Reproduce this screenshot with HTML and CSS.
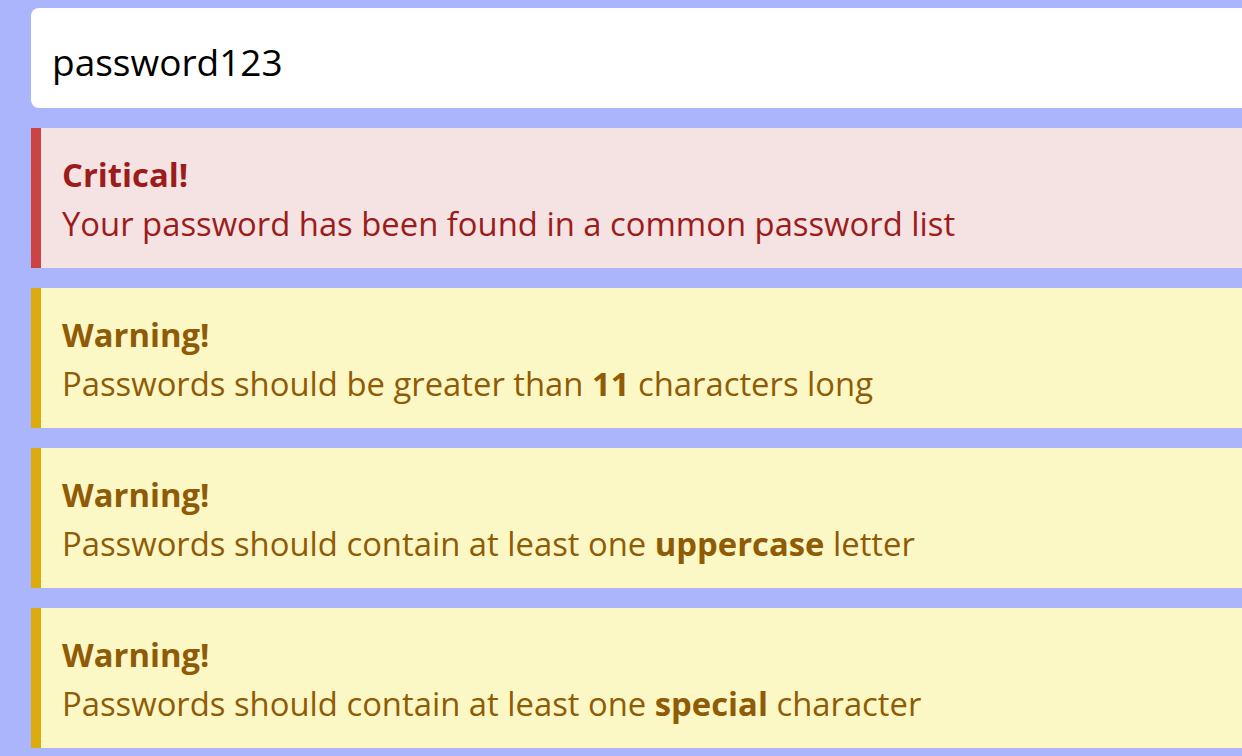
FILE: index.html
```html
<!DOCTYPE html>
<html>
<head>
<meta charset="utf-8">
<link rel="stylesheet" href="styles.css">
</head>
<body>
<div class="wrap">
  <input class="pw" type="text" value="password123">
  <div class="alert critical">
    <div class="title">Critical!</div>
    <div class="msg">Your password has been found in a common password list</div>
  </div>
  <div class="alert warning">
    <div class="title">Warning!</div>
    <div class="msg">Passwords should be greater than <b>11</b> characters long</div>
  </div>
  <div class="alert warning">
    <div class="title">Warning!</div>
    <div class="msg">Passwords should contain at least one <b>uppercase</b> letter</div>
  </div>
  <div class="alert warning">
    <div class="title">Warning!</div>
    <div class="msg">Passwords should contain at least one <b>special</b> character</div>
  </div>
</div>
</body>
</html>
```
FILE: styles.css
```css
html, body {
  margin: 0;
  padding: 0;
  overflow: hidden;
  background: #aab5fb;
  height: 756px;
}
.wrap {
  padding: 8px 0 8px 31px;
  display: flex;
  flex-direction: column;
  gap: 20px;
  font-family: "Open Sans", "Noto Sans", sans-serif;
  font-size: 32.8px;
}
.pw {
  box-sizing: border-box;
  width: 100%;
  height: 100px;
  border: none;
  border-radius: 8px 0 0 8px;
  background: #fff;
  padding: 6px 21px 0 21px;
  font-family: inherit;
  font-size: 37px;
  color: #000;
  outline: none;
}
.alert {
  box-sizing: border-box;
  height: 140px;
  padding: 22px 21px 0 21px;
  border-left: 10px solid;
}
.title {
  font-weight: 700;
  line-height: 50px;
}
.msg {
  line-height: 48px;
}
.msg b { font-weight: 700; }
.critical {
  background: #f5e2e3;
  border-color: #cc4343;
  color: #9c1c1c;
}
.warning {
  background: #fcf8c5;
  border-color: #dbab10;
  color: #8f5b06;
}
```
